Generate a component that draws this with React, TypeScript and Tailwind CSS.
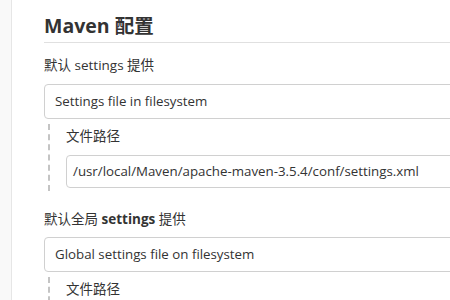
export default function App() {
  const font = { fontFamily: '"Open Sans", "Noto Sans CJK SC", sans-serif' };
  return (
    <div className="flex h-[300px] w-[450px] overflow-hidden bg-white text-[#333]" style={font}>
      <div className="w-[12px] shrink-0 border-r border-[#e6e6e6] bg-[#f9f9f9]" />
      <div className="w-[520px] shrink-0 pl-[32px] pt-[13px]">
        <h2 className="border-b border-[#e0e0e0] pb-[3px] text-[19.5px] font-bold leading-[26px] text-[#333]">
          Maven 配置
        </h2>

        <div className="mt-[12px] text-[13.5px] leading-[20px]">
          默认 settings 提供
        </div>
        <div className="mt-[9px] flex h-[35px] items-center rounded-[4px] border border-[#d0d0d0] px-[10px] text-[13.3px]">
          Settings file in filesystem
        </div>
        <div className="ml-[4px] mt-[5px] border-l-2 border-dashed border-[#c4c4c4] pb-[3px] pl-[16px]">
          <div className="pt-[2px] text-[13.5px] leading-[20px]">文件路径</div>
          <div className="mt-[9px] flex h-[33px] items-center rounded-[4px] border border-[#d0d0d0] px-[6px] text-[13.3px]">
            /usr/local/Maven/apache-maven-3.5.4/conf/settings.xml
          </div>
        </div>

        <div className="mt-[18px] text-[13.5px] leading-[20px]">
          默认全局 <span className="font-bold">settings</span> 提供
        </div>
        <div className="mt-[8px] flex h-[35px] items-center rounded-[4px] border border-[#d0d0d0] px-[10px] text-[13.3px]">
          Global settings file on filesystem
        </div>
        <div className="ml-[4px] mt-[5px] border-l-2 border-dashed border-[#c4c4c4] pl-[16px]">
          <div className="pt-[2px] text-[13.5px] leading-[20px]">文件路径</div>
          <div className="mt-[9px] h-[33px] rounded-[4px] border border-[#d0d0d0]" />
        </div>
      </div>
    </div>
  );
}
